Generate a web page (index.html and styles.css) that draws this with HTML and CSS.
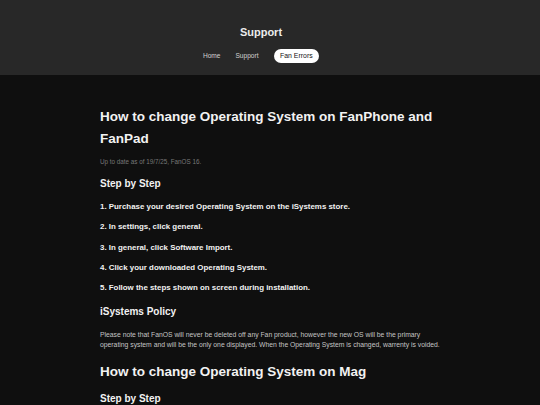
FILE: index.html
```html
<!DOCTYPE html>
<html lang="en">
<head>
  <meta charset="UTF-8">
  <meta name="viewport" content="width=device-width, initial-scale=1.0">
  <title>Fan Errors - Support</title>
  <link rel="stylesheet" href="styles.css">
</head>
<body>
  <!-- Header -->
  <header class="header">
    <h1 class="header-title">Support</h1>
    <nav class="navbar">
      <a href="#">Home</a>
      <a href="#">Support</a>
      <a href="#" class="active">Fan Errors</a>
    </nav>
  </header>

  <!-- Content -->
  <main class="content">
    <h2 class="guide-title">How to change Operating System on FanPhone and FanPad</h2>
    <p class="updated">Up to date as of 19/7/25, FanOS 16.</p>

    <h3>Step by Step</h3>
    <p class="step">1. Purchase your desired Operating System on the iSystems store.</p>
    <p class="step">2. In settings, click general.</p>
    <p class="step">3. In general, click Software Import.</p>
    <p class="step">4. Click your downloaded Operating System.</p>
    <p class="step">5. Follow the steps shown on screen during installation.</p>

    <h3>iSystems Policy</h3>
    <p class="policy">Please note that FanOS will never be deleted off any Fan product, however the new OS will be the primary operating system and will be the only one displayed. When the Operating System is changed, warrenty is voided.</p>

    <h2 class="guide-title">How to change Operating System on Mag</h2>
    <h3>Step by Step</h3>
    <p class="step">1. Purchase your desired Operating System on the iSystems store.</p>
  </main>
</body>
</html>
```

FILE: styles.css
```css
/* General */
* {
  margin: 0;
  padding: 0;
  box-sizing: border-box;
  font-family: "Liberation Sans", Arial, sans-serif;
}

body {
  background-color: #0f0f0f;
  color: #f2f2f2;
}

/* Header */
.header {
  background-color: #282828;
  height: 75px;
  padding: 25px 18px 0 0;
  text-align: center;
}

.header-title {
  font-size: 11px;
  line-height: 14px;
  font-weight: bold;
  color: #ececec;
}

.navbar {
  display: flex;
  justify-content: center;
  align-items: center;
  gap: 15px;
  margin-top: 10px;
}

.navbar a {
  color: #d0d0d0;
  text-decoration: none;
  font-size: 6.6px;
  line-height: 14px;
}

.navbar a.active {
  background-color: #fff;
  color: #111;
  font-size: 6.9px;
  padding: 0 6.5px;
  border-radius: 8px;
}

/* Content */
.content {
  width: 340px;
  margin: 0 auto;
  padding-top: 31px;
}

.guide-title {
  font-size: 13.5px;
  line-height: 22px;
  font-weight: bold;
}

.updated {
  font-size: 6.3px;
  line-height: 10px;
  color: #777;
  margin-top: 7px;
}

h3 {
  font-size: 10px;
  line-height: 14px;
  font-weight: bold;
  margin-top: 10px;
  margin-bottom: 11px;
}

.step + h3 {
  margin-top: 12px;
}

.guide-title + h3 {
  margin-top: 9px;
}

.step {
  font-size: 7.9px;
  font-weight: bold;
  line-height: 10px;
  margin-bottom: 10.25px;
}

.policy {
  font-size: 6.8px;
  line-height: 10px;
  color: #c4c4c4;
  margin-bottom: 11px;
}
```
